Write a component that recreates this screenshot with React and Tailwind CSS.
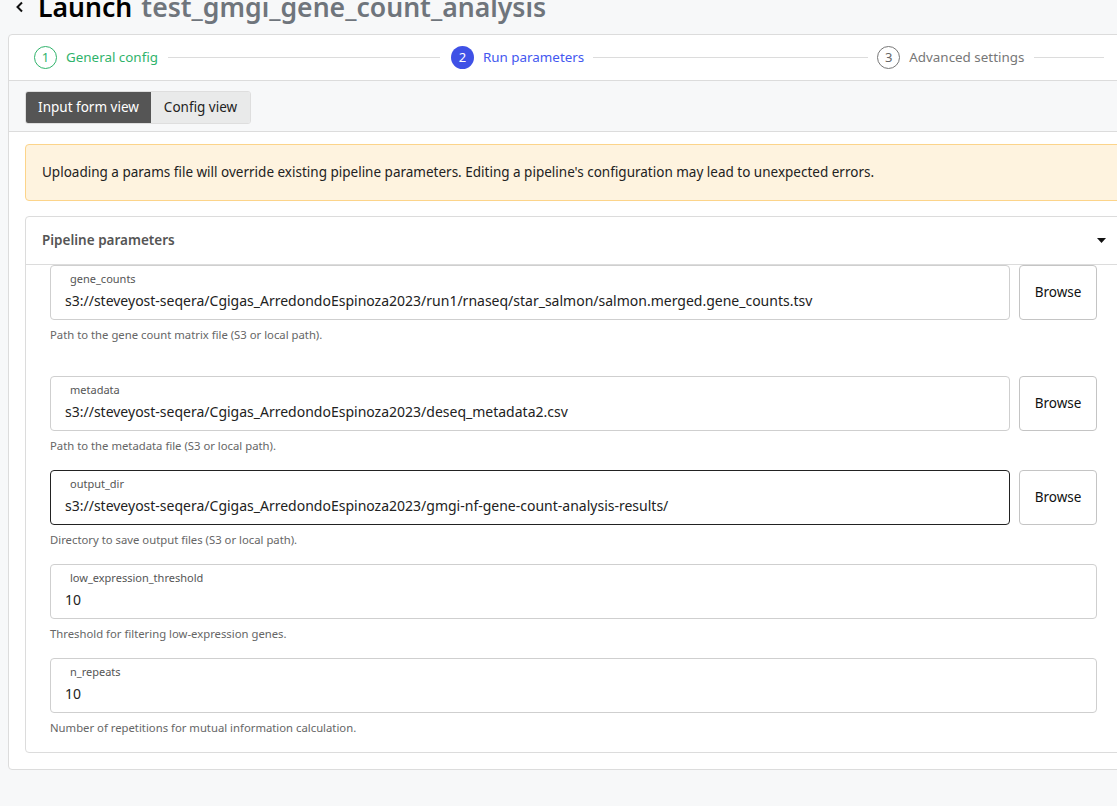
import React from "react";

const font = { fontFamily: '"Noto Sans", "Open Sans", sans-serif' };

function Field({ label, value, browse, focused, help, extra }) {
  return (
    <div className={extra ? "mb-[33px]" : "mb-[16px]"}>
      <div className="flex gap-[9px]">
        <div
          className={
            "flex-1 h-[55px] rounded-[4px] border bg-white flex flex-col " +
            (focused ? "border-[#222]" : "border-[#cfcfcf]")
          }
        >
          <div className="pl-[19px] pt-[6px] text-[11px] leading-[14px] text-[#555]">{label}</div>
          <div className="pl-[14px] pt-[6px] text-[14px] leading-[18px] text-[#222]">{value}</div>
        </div>
        {browse && (
          <div className="w-[78px] h-[55px] rounded-[4px] border border-[#c4c4c4] bg-white flex items-center justify-center text-[13.5px] text-[#111]">
            Browse
          </div>
        )}
      </div>
      <div className="mt-[7px] text-[11.3px] leading-[16px] text-[#666]">{help}</div>
    </div>
  );
}

export default function App() {
  return (
    <div className="w-[1117px] h-[806px] overflow-hidden bg-[#f7f8f9]" style={font}>
      <div className="flex items-center h-[34px] mt-[-10px]">
        <svg className="ml-[15px] mr-[13px]" width="10" height="12" viewBox="0 0 10 12">
          <path d="M7 1.5 L2.5 6 L7 10.5" fill="none" stroke="#111" strokeWidth="2" />
        </svg>
        <span className="text-[26.6px] leading-[34px] font-semibold text-black">Launch</span>
        <span className="ml-[9px] text-[26.6px] leading-[34px] font-semibold text-[#6f757c]">
          test_gmgi_gene_count_analysis
        </span>
      </div>
      <div className="ml-[8px] mt-[10px] w-[1131px] rounded-[4px] border border-[#dcdcdc] bg-white">
        <div className="flex items-center h-[46px] pl-[25px] pr-[24px] border-b border-[#dcdcdc]">
          <div className="w-[23px] h-[23px] rounded-full border border-[#2fb36b] text-[#2fb36b] flex items-center justify-center text-[13px]">
            1
          </div>
          <span className="ml-[9px] text-[13.4px] text-[#2fb36b]">General config</span>
          <div className="ml-[10px] w-[272px] h-px bg-[#dcdcdc]" />
          <div className="ml-[11px] w-[23px] h-[23px] rounded-full bg-[#3f51e6] text-white flex items-center justify-center text-[13px]">
            2
          </div>
          <span className="ml-[9px] text-[13.4px] text-[#4358f0]">Run parameters</span>
          <div className="ml-[9px] w-[275px] h-px bg-[#dcdcdc]" />
          <div className="ml-[9px] w-[23px] h-[23px] rounded-full border border-[#777] text-[#666] flex items-center justify-center text-[13px]">
            3
          </div>
          <span className="ml-[9px] text-[13.4px] text-[#777]">Advanced settings</span>
          <div className="mx-[10px] flex-1 h-px bg-[#dcdcdc]" />
        </div>
        <div className="h-[51px] bg-[#f7f8f9] border-b border-[#dcdcdc] flex items-start pt-[10px] pl-[16px]">
          <div className="flex h-[33px] rounded-[3px] border border-[#dedede] overflow-hidden">
            <div className="w-[125px] bg-[#555555] text-white text-[13.5px] flex items-center justify-center">
              Input form view
            </div>
            <div className="w-[99px] bg-[#e9eaea] text-[#222] text-[13.5px] flex items-center justify-center">
              Config view
            </div>
          </div>
        </div>
        <div className="px-[16px] pt-[12px] pb-[16px]">
          <div className="h-[57px] rounded-[4px] border border-[#fcd48a] bg-[#fef3df] flex items-center pl-[16px] text-[13.5px] text-[#222]">
            Uploading a params file will override existing pipeline parameters. Editing a pipeline's configuration may lead to unexpected errors.
          </div>
          <div className="mt-[15px] rounded-[4px] border border-[#dcdcdc]">
            <div className="h-[48px] border-b border-[#dcdcdc] flex items-center justify-between pl-[16px] pr-[15px]">
              <span className="text-[13.5px] font-semibold text-[#555]">Pipeline parameters</span>
              <svg width="9" height="5" viewBox="0 0 9 5">
                <path d="M0 0 H9 L4.5 5 Z" fill="#111" />
              </svg>
            </div>
            <div className="px-[24px]">
              <Field
                extra
                browse
                label="gene_counts"
                value="s3://steveyost-seqera/Cgigas_ArredondoEspinoza2023/run1/rnaseq/star_salmon/salmon.merged.gene_counts.tsv"
                help="Path to the gene count matrix file (S3 or local path)."
              />
              <Field
                browse
                label="metadata"
                value="s3://steveyost-seqera/Cgigas_ArredondoEspinoza2023/deseq_metadata2.csv"
                help="Path to the metadata file (S3 or local path)."
              />
              <Field
                browse
                focused
                label="output_dir"
                value="s3://steveyost-seqera/Cgigas_ArredondoEspinoza2023/gmgi-nf-gene-count-analysis-results/"
                help="Directory to save output files (S3 or local path)."
              />
              <Field
                label="low_expression_threshold"
                value="10"
                help="Threshold for filtering low-expression genes."
              />
              <Field
                label="n_repeats"
                value="10"
                help="Number of repetitions for mutual information calculation."
              />
            </div>
          </div>
        </div>
      </div>
    </div>
  );
}
